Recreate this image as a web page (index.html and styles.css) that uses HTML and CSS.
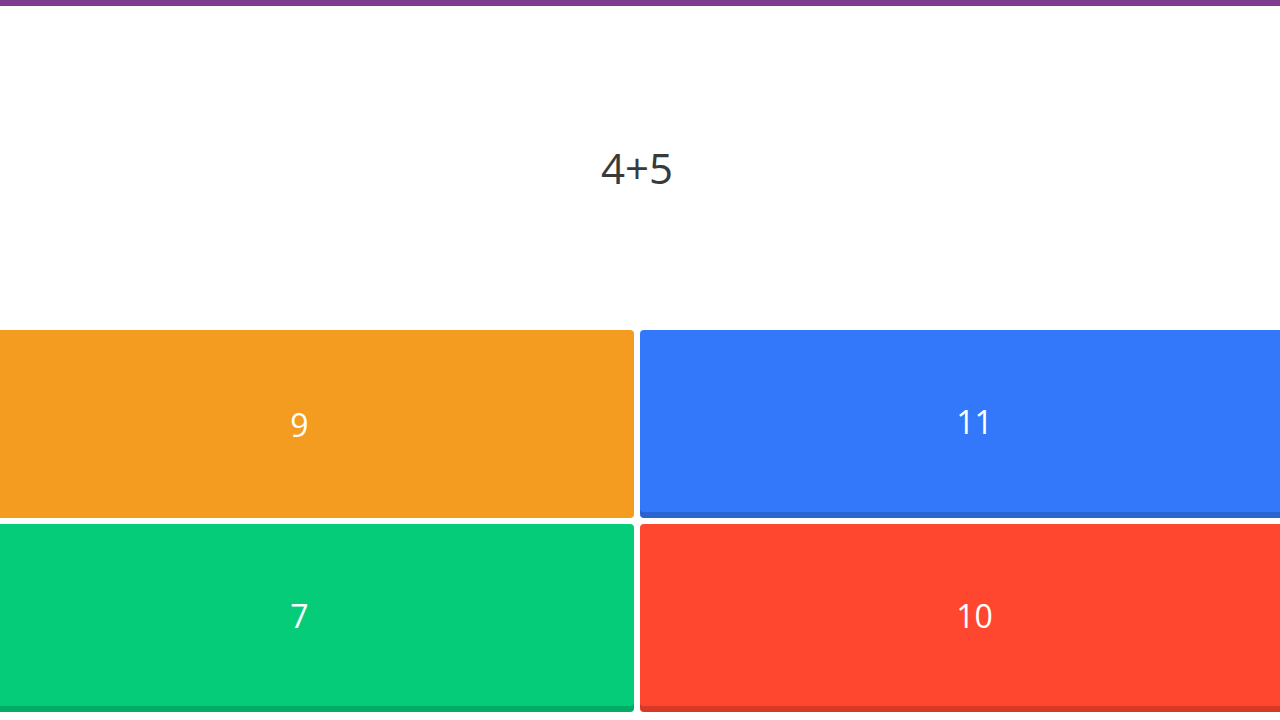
FILE: index.html
```html
<!DOCTYPE html>
<html lang="en">
<head>
<meta charset="utf-8">
<title>Quiz</title>
<link rel="stylesheet" href="styles.css">
</head>
<body>
  <div class="progress-bar"></div>
  <main class="quiz">
    <section class="question">
      <p class="question-text">4+5</p>
    </section>
    <section class="answers">
      <button class="answer answer-orange is-selected"><span>9</span></button>
      <button class="answer answer-blue"><span>11</span></button>
      <button class="answer answer-green"><span>7</span></button>
      <button class="answer answer-red"><span>10</span></button>
    </section>
  </main>
</body>
</html>
```

FILE: styles.css
```css
html, body {
  margin: 0;
  padding: 0;
  background: #ffffff;
  overflow: hidden;
  font-family: "Open Sans", "Noto Sans", sans-serif;
}

.progress-bar {
  height: 6px;
  background: #7e3c8e;
}

.quiz {
  display: flex;
  flex-direction: column;
}

.question {
  height: 324px;
  display: flex;
  align-items: center;
  justify-content: center;
  padding-right: 6px;
}

.question-text {
  margin: 0;
  font-size: 42px;
  line-height: 1;
  color: #3a3a3a;
}

.answers {
  display: grid;
  grid-template-columns: 1fr 1fr;
  grid-auto-rows: 188px;
  gap: 6px;
  width: calc(100% + 64px);
  margin-left: -35px;
}

.answer {
  border: none;
  border-radius: 4px;
  color: #ffffff;
  font-family: inherit;
  font-size: 32px;
  display: flex;
  align-items: center;
  justify-content: center;
  padding: 0 0 6px 0;
  box-shadow: inset 0 -6px 0 rgba(0, 0, 0, 0.16);
  cursor: pointer;
}

.answer.is-selected {
  box-shadow: none;
  padding: 0;
}

.answer-orange { background: #f39c1f; }
.answer-blue   { background: #3378fa; }
.answer-green  { background: #05cc79; }
.answer-red    { background: #ff462f; }
```
